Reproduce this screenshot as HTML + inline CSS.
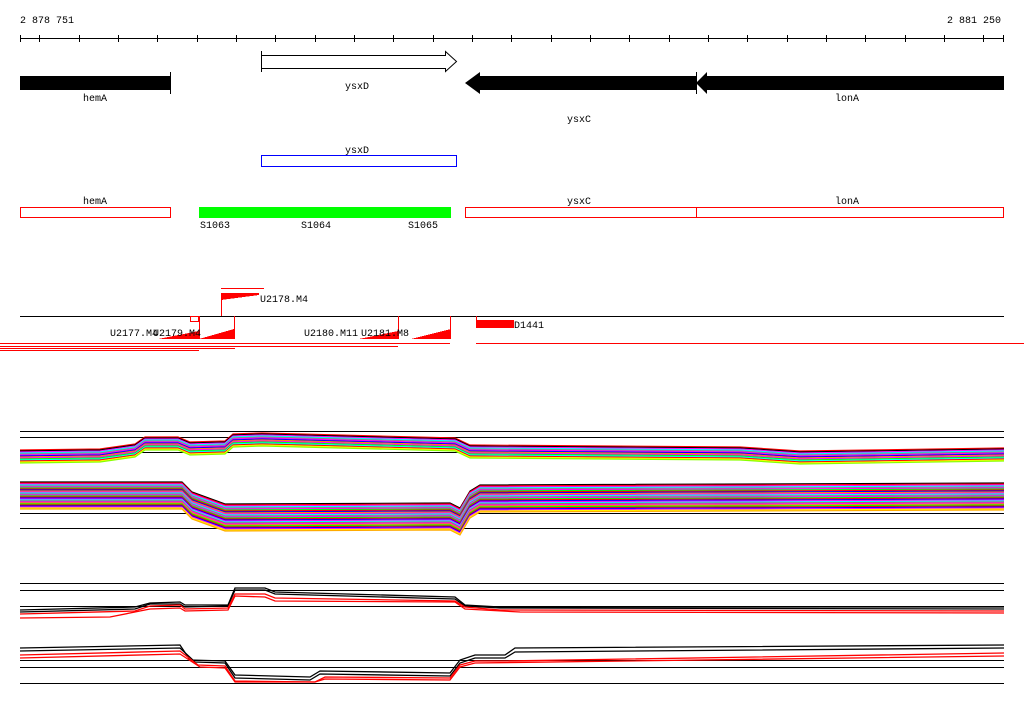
<!DOCTYPE html>
<html><head><meta charset="utf-8"><style>
html,body{margin:0;padding:0;background:#fff;}
svg{display:block;}
text{font-family:"Liberation Mono","DejaVu Sans Mono",monospace;font-size:10px;fill:#000;}
</style></head><body>
<svg width="1024" height="714" viewBox="0 0 1024 714" xmlns="http://www.w3.org/2000/svg" shape-rendering="crispEdges">
<rect width="1024" height="714" fill="#fff"/>
<text x="20" y="23">2 878 751</text>
<text x="1001" y="23" text-anchor="end">2 881 250</text>
<line x1="20" y1="38.5" x2="1004" y2="38.5" stroke="#000"/>
<g stroke="#000">
<line x1="20.5" y1="35" x2="20.5" y2="42"/><line x1="1003.5" y1="35" x2="1003.5" y2="42"/>
<line x1="39.5" y1="35" x2="39.5" y2="42"/><line x1="79.5" y1="35" x2="79.5" y2="42"/><line x1="118.5" y1="35" x2="118.5" y2="42"/><line x1="157.5" y1="35" x2="157.5" y2="42"/><line x1="197.5" y1="35" x2="197.5" y2="42"/><line x1="236.5" y1="35" x2="236.5" y2="42"/><line x1="275.5" y1="35" x2="275.5" y2="42"/><line x1="315.5" y1="35" x2="315.5" y2="42"/><line x1="354.5" y1="35" x2="354.5" y2="42"/><line x1="393.5" y1="35" x2="393.5" y2="42"/><line x1="433.5" y1="35" x2="433.5" y2="42"/><line x1="472.5" y1="35" x2="472.5" y2="42"/><line x1="511.5" y1="35" x2="511.5" y2="42"/><line x1="551.5" y1="35" x2="551.5" y2="42"/><line x1="590.5" y1="35" x2="590.5" y2="42"/><line x1="629.5" y1="35" x2="629.5" y2="42"/><line x1="669.5" y1="35" x2="669.5" y2="42"/><line x1="708.5" y1="35" x2="708.5" y2="42"/><line x1="747.5" y1="35" x2="747.5" y2="42"/><line x1="787.5" y1="35" x2="787.5" y2="42"/><line x1="826.5" y1="35" x2="826.5" y2="42"/><line x1="865.5" y1="35" x2="865.5" y2="42"/><line x1="905.5" y1="35" x2="905.5" y2="42"/><line x1="944.5" y1="35" x2="944.5" y2="42"/><line x1="983.5" y1="35" x2="983.5" y2="42"/>
</g>
<!-- genes -->
<rect x="20" y="76" width="151" height="14" fill="#000"/>
<line x1="170.5" y1="72" x2="170.5" y2="94" stroke="#000"/>
<text x="95" y="101" text-anchor="middle">hemA</text>
<path d="M261.5 55.5 H445.5 V51.5 L456.5 61.5 L445.5 71.5 V68.5 H261.5 Z" fill="#fff" stroke="#000" shape-rendering="auto"/>
<line x1="261.5" y1="51" x2="261.5" y2="72" stroke="#000"/>
<text x="357" y="89" text-anchor="middle">ysxD</text>
<path d="M465 83 L480 72 V76 H696 V90 H480 V94 Z" fill="#000" shape-rendering="auto"/>
<path d="M696 83 L707 72 V76 H1004 V90 H707 V94 Z" fill="#000" shape-rendering="auto"/>
<line x1="696.5" y1="72" x2="696.5" y2="94" stroke="#000"/>
<text x="579" y="122" text-anchor="middle">ysxC</text>
<text x="847" y="101" text-anchor="middle">lonA</text>
<rect x="261.5" y="155.5" width="195" height="11" fill="none" stroke="#00f"/>
<text x="357" y="153" text-anchor="middle">ysxD</text>
<rect x="20.5" y="207.5" width="150" height="10" fill="none" stroke="#f00"/>
<rect x="199" y="207" width="252" height="11" fill="#0f0"/>
<rect x="465.5" y="207.5" width="538" height="10" fill="none" stroke="#f00"/>
<line x1="696.5" y1="207" x2="696.5" y2="218" stroke="#f00"/>
<text x="95" y="204" text-anchor="middle">hemA</text>
<text x="579" y="204" text-anchor="middle">ysxC</text>
<text x="847" y="204" text-anchor="middle">lonA</text>
<text x="200" y="228">S1063</text>
<text x="301" y="228">S1064</text>
<text x="408" y="228">S1065</text>
<!-- red track -->
<line x1="20" y1="316.5" x2="1004" y2="316.5" stroke="#000"/>
<line x1="221" y1="288.5" x2="264" y2="288.5" stroke="#f00"/>
<line x1="221.5" y1="293" x2="221.5" y2="316" stroke="#f00"/>
<path d="M221 293 H259 V295 L221 300 Z" fill="#f00"/>
<text x="260" y="302">U2178.M4</text>
<rect x="190.5" y="316.5" width="8" height="5" fill="none" stroke="#f00"/>
<path d="M158 339 L199 331 V339 Z M199 339 L234 329 V339 Z M359 339 L398 331 V339 Z M411 339 L451 329 V339 Z" fill="#f00"/>
<g stroke="#f00"><line x1="199.5" y1="316" x2="199.5" y2="339"/><line x1="234.5" y1="316" x2="234.5" y2="339"/><line x1="398.5" y1="316" x2="398.5" y2="339"/><line x1="450.5" y1="316" x2="450.5" y2="339"/><line x1="476.5" y1="316" x2="476.5" y2="328"/></g>
<rect x="476" y="320" width="38" height="8" fill="#f00"/>
<text x="110" y="336">U2177.M4</text>
<text x="153" y="336">U2179.M4</text>
<text x="304" y="336">U2180.M11</text>
<text x="361" y="336">U2181.M8</text>
<text x="514" y="328">D1441</text>
<g stroke="#f00">
<line x1="207" y1="343.5" x2="450" y2="343.5"/><line x1="476" y1="343.5" x2="1024" y2="343.5"/>
<line x1="0" y1="346.5" x2="398" y2="346.5"/><line x1="0" y1="348.5" x2="235" y2="348.5"/><line x1="0" y1="350.5" x2="199" y2="350.5"/>
</g>
<line x1="0" y1="343.5" x2="207" y2="343.5" stroke="#f00"/>
<!-- bands -->
<defs>
<polyline id="b1" fill="none" points="20,457 100,456 135,451 145,444 178,444 190,449 225,448 233,441 262,440 455,445 470,452 740,454 800,458 1004,455"/>
<polyline id="b2" fill="none" points="20,496 182,496 192,506 225,518 450,517 460,522 470,505 480,499 1004,497"/>
</defs>
<g stroke="#000"><line x1="20" y1="431.5" x2="1004" y2="431.5"/><line x1="20" y1="437.5" x2="1004" y2="437.5"/><line x1="20" y1="452.5" x2="1004" y2="452.5"/>
<line x1="20" y1="513.5" x2="1004" y2="513.5"/><line x1="20" y1="528.5" x2="1004" y2="528.5"/></g>
<g stroke-width="1.2" shape-rendering="auto">
<use href="#b1" y="-7" stroke="#f00"/><use href="#b1" y="-6" stroke="#000"/><use href="#b1" y="-5" stroke="#f0f"/><use href="#b1" y="-4" stroke="#0ff"/><use href="#b1" y="-3" stroke="#888"/><use href="#b1" y="-2" stroke="#f0f"/><use href="#b1" y="-1" stroke="#00f"/><use href="#b1" y="0" stroke="#f80"/><use href="#b1" y="1" stroke="#f0f"/><use href="#b1" y="2" stroke="#0f0"/><use href="#b1" y="3" stroke="#0ff"/><use href="#b1" y="4" stroke="#f00"/><use href="#b1" y="5" stroke="#ff0"/><use href="#b1" y="6" stroke="#8f0"/>
<use href="#b2" y="-14" stroke="#000"/><use href="#b2" y="-13" stroke="#f00"/><use href="#b2" y="-12" stroke="#f0f"/><use href="#b2" y="-11" stroke="#0ff"/><use href="#b2" y="-10" stroke="#888"/><use href="#b2" y="-9" stroke="#f0f"/><use href="#b2" y="-8" stroke="#0f0"/><use href="#b2" y="-7" stroke="#f00"/><use href="#b2" y="-6" stroke="#00f"/><use href="#b2" y="-5" stroke="#f80"/><use href="#b2" y="-4" stroke="#f0f"/><use href="#b2" y="-3" stroke="#0ff"/><use href="#b2" y="-2" stroke="#888"/><use href="#b2" y="-1" stroke="#f0f"/><use href="#b2" y="0" stroke="#0f0"/><use href="#b2" y="1" stroke="#f00"/><use href="#b2" y="2" stroke="#00f"/><use href="#b2" y="3" stroke="#f0f"/><use href="#b2" y="4" stroke="#0ff"/><use href="#b2" y="5" stroke="#a66"/><use href="#b2" y="6" stroke="#f0f"/><use href="#b2" y="7" stroke="#f80"/><use href="#b2" y="8" stroke="#0f0"/><use href="#b2" y="9" stroke="#f00"/><use href="#b2" y="10" stroke="#00f"/><use href="#b2" y="11" stroke="#f0f"/><use href="#b2" y="12" stroke="#ff0"/><use href="#b2" y="13" stroke="#fa0"/>
</g>
<!-- lower group -->
<g stroke="#000"><line x1="20" y1="583.5" x2="1004" y2="583.5"/><line x1="20" y1="590.5" x2="1004" y2="590.5"/><line x1="20" y1="606.5" x2="1004" y2="606.5"/>
<line x1="20" y1="660.5" x2="1004" y2="660.5"/><line x1="20" y1="667.5" x2="1004" y2="667.5"/><line x1="20" y1="683.5" x2="1004" y2="683.5"/></g>
<g fill="none" shape-rendering="auto" stroke-width="1.3">
<polyline stroke="#000" points="20,610 135,607 150,603 180,602 185,605 228,605 235,588 265,588 275,592 455,597 465,605 500,607 1004,607"/>
<polyline stroke="#000" points="20,612 135,609 150,604 180,604 185,607 228,606 235,590 265,590 275,594 455,599 465,606 500,608 1004,609"/>
<polyline stroke="#f00" points="20,614 135,611 150,606 180,605 185,609 228,608 235,594 265,594 275,598 455,601 465,607 500,610 1004,611"/>
<polyline stroke="#f00" points="20,618 110,617 150,609 180,608 185,611 228,610 235,596 265,597 275,601 455,602 465,609 520,612 1004,613"/>
<polyline stroke="#000" points="20,648 180,645 190,660 225,661 235,675 310,677 320,671 450,673 460,660 475,655 505,655 515,648 1004,645"/>
<polyline stroke="#000" points="20,651 180,648 195,662 225,663 235,678 310,680 320,674 450,676 460,663 475,658 505,658 515,652 1004,648"/>
<polyline stroke="#f00" points="20,655 180,651 198,665 225,666 235,681 315,682 325,677 450,678 460,665 475,661 505,661 1004,653"/>
<polyline stroke="#f00" points="20,658 180,654 200,667 225,668 235,682 315,682 325,679 450,680 460,667 475,663 1004,656"/>
</g>
</svg>
</body></html>
